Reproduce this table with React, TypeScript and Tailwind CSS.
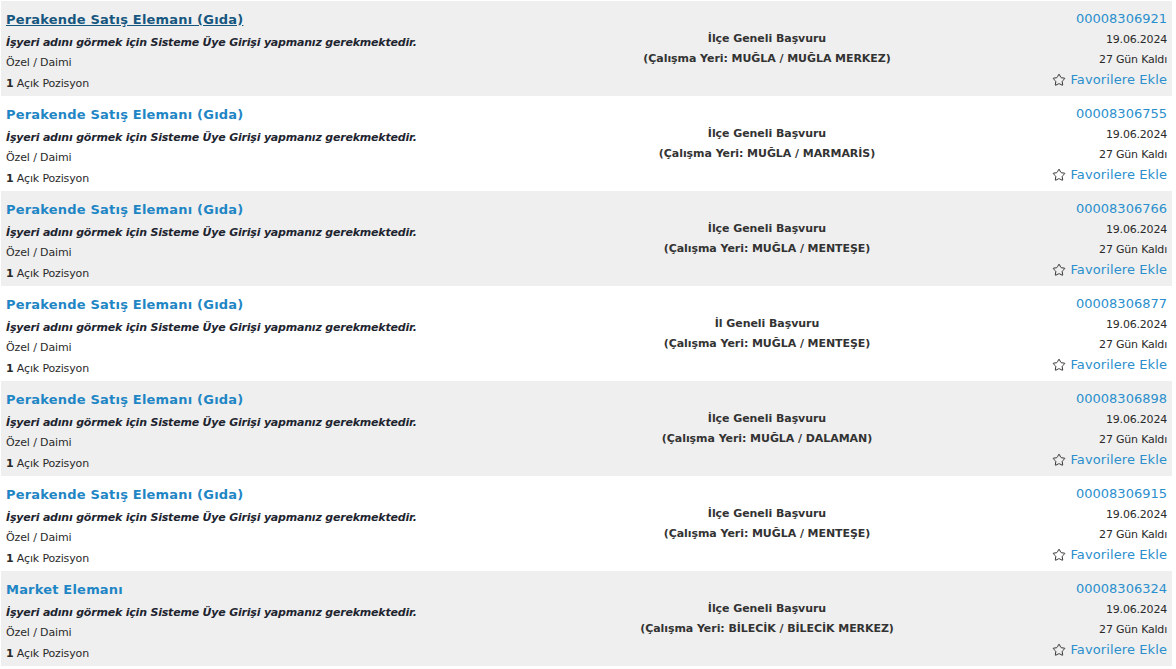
import React from "react";
import { Star } from "lucide-react";

type Job = {
  title: string;
  scope: string;
  place: string;
  no: string;
  hover?: boolean;
};

const jobs: Job[] = [
  { title: "Perakende Satış Elemanı (Gıda)", scope: "İlçe Geneli Başvuru", place: "(Çalışma Yeri: MUĞLA / MUĞLA MERKEZ)", no: "00008306921", hover: true },
  { title: "Perakende Satış Elemanı (Gıda)", scope: "İlçe Geneli Başvuru", place: "(Çalışma Yeri: MUĞLA / MARMARİS)", no: "00008306755" },
  { title: "Perakende Satış Elemanı (Gıda)", scope: "İlçe Geneli Başvuru", place: "(Çalışma Yeri: MUĞLA / MENTEŞE)", no: "00008306766" },
  { title: "Perakende Satış Elemanı (Gıda)", scope: "İl Geneli Başvuru", place: "(Çalışma Yeri: MUĞLA / MENTEŞE)", no: "00008306877" },
  { title: "Perakende Satış Elemanı (Gıda)", scope: "İlçe Geneli Başvuru", place: "(Çalışma Yeri: MUĞLA / DALAMAN)", no: "00008306898" },
  { title: "Perakende Satış Elemanı (Gıda)", scope: "İlçe Geneli Başvuru", place: "(Çalışma Yeri: MUĞLA / MENTEŞE)", no: "00008306915" },
  { title: "Market Elemanı", scope: "İlçe Geneli Başvuru", place: "(Çalışma Yeri: BİLECİK / BİLECİK MERKEZ)", no: "00008306324" },
];

export default function App() {
  return (
    <div
      className="w-[1176px] h-[669px] bg-white pt-[1px] pl-[1px] pr-[4px] text-[#333]"
      style={{ fontFamily: '"DejaVu Sans", Verdana, sans-serif' }}
    >
      {jobs.map((j, i) => (
        <div
          key={i}
          className={`flex h-[95px] ${i % 2 === 0 ? "bg-[#efefef]" : "bg-white"}`}
        >
          <div className="w-[529px] pl-[5px] pt-[8px]">
            <div className="h-[20px] leading-[20px]">
              <a
                className={`text-[13px] font-bold tracking-[0.2px] ${
                  j.hover ? "text-[#16577f] underline" : "text-[#1f86c5]"
                }`}
              >
                {j.title}
              </a>
            </div>
            <div className="mt-[4px] h-[20px] leading-[20px] text-[11px] font-bold italic text-[#1e2530] tracking-[-0.2px] whitespace-nowrap">
              İşyeri adını görmek için Sisteme Üye Girişi yapmanız gerekmektedir.
            </div>
            <div className="h-[20px] leading-[20px] text-[11px] tracking-[-0.12px] text-[#2a2a2a]">
              Özel / Daimi
            </div>
            <div className="mt-[1px] h-[20px] leading-[20px] text-[11px] tracking-[-0.15px] text-[#2a2a2a]">
              <span className="font-bold">1</span> Açık Pozisyon
            </div>
          </div>
          <div className="w-[474px] flex flex-col items-center justify-center text-[11px] font-bold text-[#333] tracking-[-0.06px]">
            <div className="h-[20px] leading-[20px]">{j.scope}</div>
            <div className="h-[20px] leading-[20px]">{j.place}</div>
          </div>
          <div className="flex-1 flex flex-col items-end pr-[5px] pt-[8px]">
            <div className="h-[20px] leading-[20px] text-[13px] text-[#2b8fcd] tracking-[0px]">
              {j.no}
            </div>
            <div className="mt-[1px] h-[20px] leading-[20px] text-[11px] text-[#2a2a2a] tracking-[-0.2px]">
              19.06.2024
            </div>
            <div className="h-[20px] leading-[20px] text-[11px] text-[#2a2a2a] tracking-[-0.2px]">
              27 Gün Kaldı
            </div>
            <div className="h-[20px] leading-[20px] flex items-center gap-[4px]">
              <Star size={14} strokeWidth={1.7} className="text-[#333]" />
              <span className="text-[13px] text-[#2b8fcd] tracking-[0.1px]">Favorilere Ekle</span>
            </div>
          </div>
        </div>
      ))}
    </div>
  );
}
